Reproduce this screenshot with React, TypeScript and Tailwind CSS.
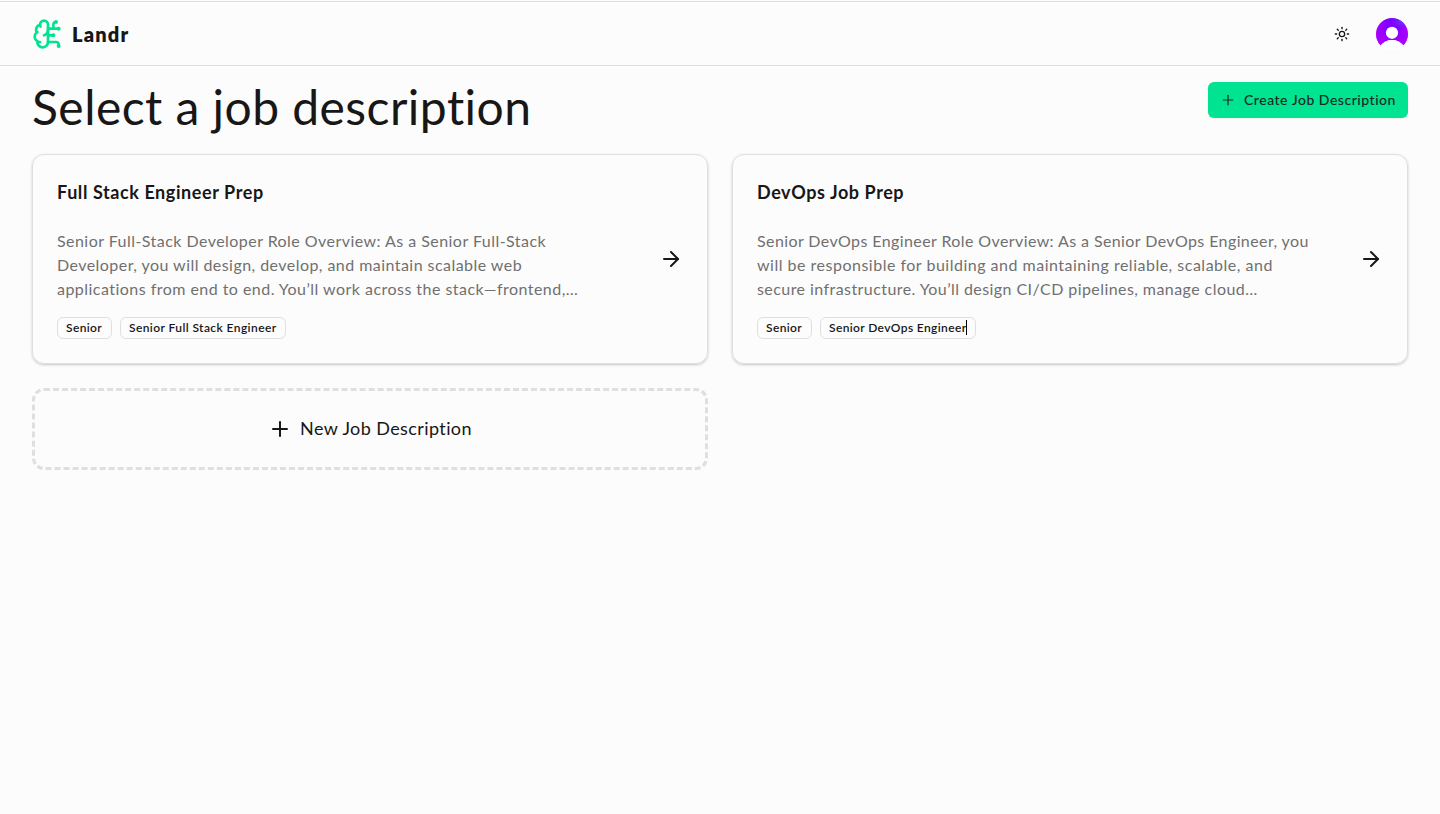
import type { ReactNode } from "react";
import { ArrowRight, BrainCircuit, Plus, Sun } from "lucide-react";

type Job = {
  name: string;
  lines: { text: string; tracking: string }[];
  title: string;
  titleClass: string;
  caret?: boolean;
};

const jobs: Job[] = [
  {
    name: "Full Stack Engineer Prep",
    lines: [
      { text: "Senior Full-Stack Developer Role Overview: As a Senior Full-Stack", tracking: "tracking-[0.455px]" },
      { text: "Developer, you will design, develop, and maintain scalable web", tracking: "tracking-[0.45px]" },
      { text: "applications from end to end. You’ll work across the stack—frontend,…", tracking: "tracking-[0.465px]" },
    ],
    title: "Senior Full Stack Engineer",
    titleClass: "w-[166px] tracking-[0.41px]",
  },
  {
    name: "DevOps Job Prep",
    lines: [
      { text: "Senior DevOps Engineer Role Overview: As a Senior DevOps Engineer, you", tracking: "tracking-[0.4px]" },
      { text: "will be responsible for building and maintaining reliable, scalable, and", tracking: "tracking-[0.5px]" },
      { text: "secure infrastructure. You’ll design CI/CD pipelines, manage cloud…", tracking: "tracking-[0.43px]" },
    ],
    title: "Senior DevOps Engineer",
    titleClass: "w-[156px] tracking-[0.37px]",
    caret: true,
  },
];

function Avatar() {
  return (
    <svg className="size-8 rounded-full" viewBox="0 0 32 32">
      <defs>
        <linearGradient id="avatar" x1="0" y1="0.6" x2="1" y2="0.6">
          <stop offset="0" stopColor="#a800ff" />
          <stop offset="0.35" stopColor="#8000ff" />
          <stop offset="0.7" stopColor="#8000ff" />
          <stop offset="1" stopColor="#b000ff" />
        </linearGradient>
        <linearGradient id="lower" x1="0" y1="0" x2="0" y2="1">
          <stop offset="0.35" stopColor="#b000ff" stopOpacity="0" />
          <stop offset="0.8" stopColor="#b000ff" stopOpacity="0.7" />
        </linearGradient>
        <radialGradient id="glow" cx="0.8" cy="0.2" r="0.3">
          <stop offset="0" stopColor="#6c30ff" />
          <stop offset="1" stopColor="#6c30ff" stopOpacity="0" />
        </radialGradient>
      </defs>
      <path d="M0 0 H32 V27.5 H27.5 C24.5 24 21 22 16 22 C11 22 7.5 24 4.5 27.5 H0 Z" fill="url(#avatar)" />
      <path d="M0 0 H32 V27.5 H27.5 C24.5 24 21 22 16 22 C11 22 7.5 24 4.5 27.5 H0 Z" fill="url(#lower)" />
      <rect width="32" height="20" fill="url(#glow)" />
      <circle cx="16" cy="14.8" r="6.1" fill="#fff" />
      <path d="M4.5 27.5 C7.5 24 11 22 16 22 C21 22 24.5 24 27.5 27.5 V32 H4.5 Z" fill="#fff" />
    </svg>
  );
}

function Badge({ className, children }: { className: string; children: ReactNode }) {
  return (
    <span
      className={`relative flex h-[22px] items-center rounded-md border border-[#dfdfdf] px-2 text-xs font-semibold whitespace-nowrap ${className}`}
    >
      {children}
    </span>
  );
}

function JobCard({ job }: { job: Job }) {
  return (
    <a className="flex h-[210px] items-center justify-between rounded-xl border border-[#dfdfdf] px-6 shadow-[0_1px_3px_rgba(0,0,0,0.17),0_1px_2px_-1px_rgba(0,0,0,0.17)]">
      <div className="flex flex-col">
        <h2 className="pb-0.5 text-lg leading-[26px] font-bold tracking-[0.58px]">{job.name}</h2>
        <p className="mt-[22px] text-base leading-6 text-[#707070]">
          {job.lines.map((line) => (
            <span key={line.text} className={`block whitespace-nowrap ${line.tracking}`}>
              {line.text}
            </span>
          ))}
        </p>
        <div className="mt-4 flex gap-2">
          <Badge className="w-[55px] tracking-[0.37px]">Senior</Badge>
          <Badge className={job.titleClass}>
            {job.title}
            {job.caret && <span className="absolute top-[2px] left-[145px] h-[15px] w-px bg-black" />}
          </Badge>
        </div>
      </div>
      <ArrowRight className="size-6" />
    </a>
  );
}

export default function App() {
  return (
    <div className="min-h-screen bg-[#fcfcfc] pt-px font-['Lato',sans-serif] text-[#171717]">
      <header className="flex h-[65px] items-center justify-between border-y border-[#dfdfdf] px-8">
        <div className="flex items-center gap-2">
          <BrainCircuit className="size-8 text-[#00e391]" />
          <span className="text-xl font-extrabold tracking-[1.2px]">Landr</span>
        </div>
        <div className="flex items-center gap-4">
          <button className="flex size-9 items-center justify-center">
            <Sun className="size-4" />
          </button>
          <Avatar />
        </div>
      </header>
      <main className="px-8 py-4">
        <div className="mb-6 flex h-12 items-start justify-between">
          <h1 className="pt-px text-5xl leading-none tracking-[0.45px] whitespace-nowrap">Select a job description</h1>
          <button className="flex h-9 w-[200px] items-center gap-2 rounded-md bg-[#00e391] px-3 text-sm font-medium tracking-[0.52px] whitespace-nowrap text-[#1e2723] shadow-xs">
            <Plus className="size-4 shrink-0" strokeWidth={1.8} />
            Create Job Description
          </button>
        </div>
        <div className="grid grid-cols-2 gap-6">
          {jobs.map((job) => (
            <JobCard key={job.name} job={job} />
          ))}
          <a className="flex h-[82px] items-center justify-center gap-2 rounded-xl border-3 border-dashed border-[#dfdfdf] text-lg tracking-[0.4px]">
            <Plus className="size-6" />
            <span className="pb-0.5">New Job Description</span>
          </a>
        </div>
      </main>
    </div>
  );
}
